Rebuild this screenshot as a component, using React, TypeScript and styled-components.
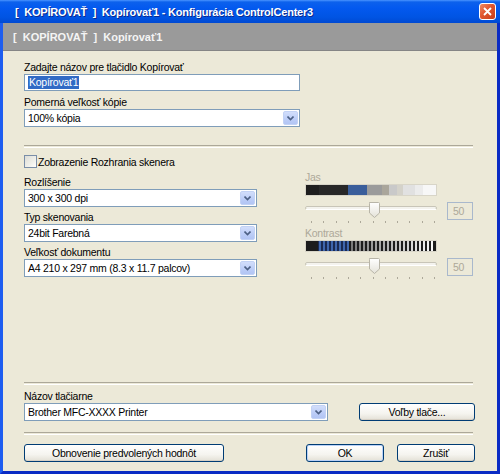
import styled, { createGlobalStyle } from 'styled-components';

const GlobalStyle = createGlobalStyle`
    html, body {
        margin: 0;
        padding: 0;
        background: #ffffff;
    }

    body {
        font-family: "Liberation Sans", Arial, sans-serif;
        font-size: 10.5px;
        letter-spacing: -0.25px;
        color: #000000;
    }
`;

const Frame = styled.div`
    width: 500px;
    height: 474px;
    display: flex;
    flex-direction: column;
    overflow: hidden;
`;

const TitleBar = styled.div`
    flex: none;
    height: 23px;
    display: flex;
    align-items: center;
    padding: 0 4px 0 15px;
    background: linear-gradient(
        to bottom,
        #4a94ff 0,
        #0c61ec 2px,
        #0359ef 35%,
        #0054e3 75%,
        #0049d2 100%
    );
`;

const TitleText = styled.div`
    color: #ffffff;
    font-weight: bold;
    font-size: 11px;
    letter-spacing: -0.2px;
    white-space: pre;
    text-shadow: 1px 1px 0 #0b2a8f;
`;

const CloseButton = styled.div`
    margin-left: auto;
    width: 17px;
    height: 17px;
    box-sizing: border-box;
    border: 1px solid #ffffff;
    border-radius: 3px;
    background: linear-gradient(135deg, #ee8a63 0%, #e0562f 45%, #c63e1a 100%);
    display: flex;
    align-items: center;
    justify-content: center;
`;

const Body = styled.div`
    flex: 1;
    display: flex;
    flex-direction: column;
    background: #ece9d8;
    border-left: 3px solid #1d5df0;
    border-right: 3px solid #0a2bc4;
    border-bottom: 3px solid #0a2bc4;
`;

const HeaderBand = styled.div`
    flex: none;
    height: 27px;
    display: flex;
    align-items: center;
    padding-left: 10px;
    background: #9a9a9a;
    border-bottom: 1px solid #858585;
    color: #f4f4f4;
    font-weight: bold;
    font-size: 11px;
    letter-spacing: 0;
    white-space: pre;
`;

const Content = styled.div`
    flex: 1;
    display: flex;
    flex-direction: column;
    padding: 9px 22px 9px 21px;
`;

const Stack = styled.div<{ $gap: number; $top?: number }>`
    display: flex;
    flex-direction: column;
    gap: ${(p) => p.$gap}px;
    padding-top: ${(p) => p.$top ?? 0}px;
`;

const Field = styled.div`
    display: flex;
    flex-direction: column;
`;

const Label = styled.div<{ $disabled?: boolean }>`
    line-height: 14px;
    height: 14px;
    white-space: nowrap;
    color: ${(p) => (p.$disabled ? '#aca899' : '#000000')};
`;

const TextBox = styled.div<{ $width: number }>`
    width: ${(p) => p.$width}px;
    height: 17px;
    box-sizing: border-box;
    border: 1px solid #7f9db9;
    background: #ffffff;
    display: flex;
    align-items: center;
    padding-left: 3px;

    .selected {
        background: #316ac5;
        color: #ffffff;
        line-height: 13px;
        padding: 0 1px;
    }
`;

const SelectBox = styled.div<{ $width: number }>`
    width: ${(p) => p.$width}px;
    height: 18px;
    box-sizing: border-box;
    border: 1px solid #7f9db9;
    background: #ffffff;
    display: flex;
    align-items: center;
    padding: 0 1px 0 3px;
    white-space: nowrap;
`;

const SelectArrow = styled.div`
    margin-left: auto;
    width: 15px;
    height: 14px;
    box-sizing: border-box;
    border: 1px solid #c2d2f5;
    border-radius: 2px;
    background: linear-gradient(to bottom, #d2defb 0%, #bccdf7 60%, #b2c5f4 100%);
    display: flex;
    align-items: center;
    justify-content: center;
`;

const Separator = styled.div<{ $top: number; $bottom: number }>`
    height: 1px;
    margin: ${(p) => p.$top}px 2px ${(p) => p.$bottom}px 0;
    border-top: 1px solid #aca899;
    border-bottom: 1px solid #ffffff;
`;

const CheckRow = styled.label`
    display: flex;
    align-items: center;
    height: 13px;
    margin-top: 7px;
    white-space: nowrap;
`;

const CheckBox = styled.span`
    width: 13px;
    height: 13px;
    box-sizing: border-box;
    border: 1px solid #7a8ea8;
    background: linear-gradient(135deg, #dcdcd6 0%, #f0f0ea 60%, #ffffff 100%);
    margin-right: 1px;
    flex: none;
`;

const Columns = styled.div`
    display: grid;
    grid-template-columns: 233px 1fr;
    column-gap: 48px;
    align-items: start;
    margin-top: 2px;
`;

const SliderRow = styled.div<{ $top: number }>`
    display: flex;
    align-items: flex-start;
    margin-top: ${(p) => p.$top}px;
`;

const ValueBox = styled.div`
    width: 26px;
    height: 18px;
    box-sizing: border-box;
    margin-left: 10px;
    border: 1px solid #a9b8cc;
    background: #ece9d8;
    color: #aca899;
    display: flex;
    align-items: center;
    padding-left: 5px;
`;

const Bottom = styled.div`
    margin-top: auto;
    display: flex;
    flex-direction: column;
`;

const ButtonRow = styled.div<{ $top?: number }>`
    display: flex;
    align-items: center;
    margin-top: ${(p) => p.$top ?? 0}px;
`;

const Button = styled.button<{ $width: number; $default?: boolean; $push?: boolean }>`
    width: ${(p) => p.$width}px;
    height: 18px;
    box-sizing: border-box;
    margin-left: ${(p) => (p.$push ? 'auto' : '0')};
    padding: 0;
    border: 1px solid #003c74;
    border-radius: 3px;
    background: linear-gradient(to bottom, #ffffff 0%, #f5f4ef 60%, #e3e0d6 100%);
    box-shadow: ${(p) =>
        p.$default ? 'inset 0 0 0 1px #b9d1f7' : 'inset 0 -1px 0 #d6d0c5'};
    font-family: "Liberation Sans", Arial, sans-serif;
    font-size: 10.5px;
    letter-spacing: -0.25px;
    color: #000000;
    white-space: nowrap;
`;

const Chevron = () => (
    <svg width="7" height="5" viewBox="0 0 7 5">
        <path d="M0.5 0.5 L3.5 3.5 L6.5 0.5" fill="none" stroke="#4d6185" strokeWidth="1.6" />
    </svg>
);

const Select = ({ width, value }: { width: number; value: string }) => (
    <SelectBox $width={width}>
        {value}
        <SelectArrow>
            <Chevron />
        </SelectArrow>
    </SelectBox>
);

const brightness: [number, number, string][] = [
    [0, 14, '#1e1e1e'],
    [14, 43, '#282828'],
    [43, 62, '#3a5e9b'],
    [62, 77, '#9b9b9b'],
    [77, 84, '#aaa69b'],
    [84, 92, '#c9c9c9'],
    [92, 98, '#d4d2ca'],
    [98, 110, '#e1e1e1'],
    [110, 118, '#ececec'],
    [118, 132, '#f7f7f7'],
];

const BrightnessBar = () => (
    <svg width="132" height="12">
        {brightness.map(([a, b, c]) => (
            <rect key={a} x={a} y={0} width={b - a} height={12} fill={c} />
        ))}
        <rect x="0.5" y="0.5" width="131" height="11" fill="none" stroke="#d8d5c8" />
    </svg>
);

const contrastStripes = () => {
    const out = [];
    for (let x = 14; x < 130; x += 4) {
        let color: string;
        if (x < 44) color = '#3f66ad';
        else {
            const t = (x - 44) / 86;
            const v = Math.round(120 + t * 135);
            color = `rgb(${v},${v},${v})`;
        }
        out.push(<rect key={x} x={x} y={1} width={2} height={10} fill={color} />);
    }
    return out;
};

const ContrastBar = () => (
    <svg width="132" height="12">
        <rect x="0" y="0" width="132" height="12" fill="#1c1c1c" />
        <rect x="13" y="0" width="31" height="12" fill="#1a2a52" />
        {contrastStripes()}
        <rect x="0.5" y="0.5" width="131" height="11" fill="none" stroke="#d8d5c8" />
    </svg>
);

const Slider = () => (
    <svg width="132" height="24">
        <defs>
            <linearGradient id="thumb" x1="0" y1="0" x2="0" y2="1">
                <stop offset="0" stopColor="#ffffff" />
                <stop offset="1" stopColor="#e4e2d8" />
            </linearGradient>
        </defs>
        <rect x="0.5" y="4.5" width="131" height="3" rx="1.5" fill="#f4f3ee" stroke="#c8c5b8" />
        <line x1="1" y1="7.5" x2="131" y2="7.5" stroke="#ffffff" />
        {Array.from({ length: 11 }, (_, i) => (
            <rect key={i} x={Math.round(6 + i * 12.3)} y={19} width={1} height={2} fill="#aca899" />
        ))}
        <path
            d="M64.5 0.5 H73.5 Q74.5 0.5 74.5 1.5 V11 L69.5 15.5 L64.5 11 V1.5 Q64.5 0.5 65.5 0.5 Z"
            fill="url(#thumb)"
            stroke="#b8b5a8"
        />
    </svg>
);

export default function App() {
    return (
        <>
            <GlobalStyle />
            <Frame>
                <TitleBar>
                    <TitleText>{'[  KOPÍROVAŤ  ]  Kopírovať1 - Konfigurácia ControlCenter3'}</TitleText>
                    <CloseButton>
                        <svg width="9" height="9" viewBox="0 0 9 9">
                            <path d="M1 1 L8 8 M8 1 L1 8" stroke="#ffffff" strokeWidth="1.8" />
                        </svg>
                    </CloseButton>
                </TitleBar>
                <Body>
                    <HeaderBand>{'[  KOPÍROVAŤ  ]  Kopírovať1'}</HeaderBand>
                    <Content>
                        <Stack $gap={4}>
                            <Field>
                                <Label>Zadajte názov pre tlačidlo Kopírovať</Label>
                                <TextBox $width={276}>
                                    <span className="selected">Kopírovať1</span>
                                </TextBox>
                            </Field>
                            <Field>
                                <Label>Pomerná veľkosť kópie</Label>
                                <Select width={276} value="100% kópia" />
                            </Field>
                        </Stack>

                        <Separator $top={18} $bottom={0} />

                        <CheckRow>
                            <CheckBox />
                            Zobrazenie Rozhrania skenera
                        </CheckRow>

                        <Columns>
                            <Stack $gap={3} $top={5}>
                                <Field>
                                    <Label>Rozlíšenie</Label>
                                    <Select width={233} value="300 x 300 dpi" />
                                </Field>
                                <Field>
                                    <Label>Typ skenovania</Label>
                                    <Select width={233} value="24bit Farebná" />
                                </Field>
                                <Field>
                                    <Label>Veľkosť dokumentu</Label>
                                    <Select width={233} value="A4 210 x 297 mm (8.3 x 11.7 palcov)" />
                                </Field>
                            </Stack>

                            <Field>
                                <Label $disabled>Jas</Label>
                                <BrightnessBar />
                                <SliderRow $top={6}>
                                    <Slider />
                                    <ValueBox>50</ValueBox>
                                </SliderRow>
                                <Label $disabled>Kontrast</Label>
                                <ContrastBar />
                                <SliderRow $top={6}>
                                    <Slider />
                                    <ValueBox>50</ValueBox>
                                </SliderRow>
                            </Field>
                        </Columns>

                        <Bottom>
                            <Separator $top={0} $bottom={4} />
                            <Field>
                                <Label>Názov tlačiarne</Label>
                                <ButtonRow>
                                    <Select width={304} value="Brother MFC-XXXX Printer" />
                                    <Button $width={116} $push>
                                        Voľby tlače...
                                    </Button>
                                </ButtonRow>
                            </Field>
                            <Separator $top={11} $bottom={0} />
                            <ButtonRow $top={9}>
                                <Button $width={200}>Obnovenie predvolených hodnôt</Button>
                                <Button $width={78} $push $default>
                                    OK
                                </Button>
                                <Button $width={78} style={{ marginLeft: 13 }}>
                                    Zrušiť
                                </Button>
                            </ButtonRow>
                        </Bottom>
                    </Content>
                </Body>
            </Frame>
        </>
    );
}
